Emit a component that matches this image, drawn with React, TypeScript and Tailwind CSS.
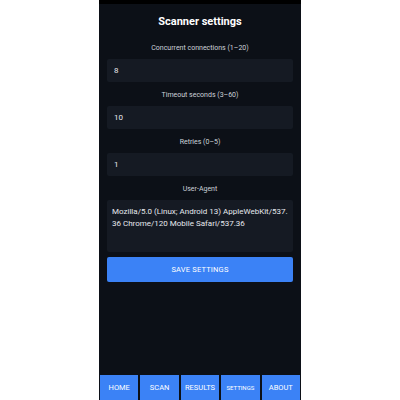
import { useState } from "react";

const NAV = ["HOME", "SCAN", "RESULTS", "SETTINGS", "ABOUT"];

function Field({
  label,
  value,
  onChange,
}: {
  label: string;
  value: string;
  onChange: (v: string) => void;
}) {
  return (
    <div className="flex flex-col">
      <label className="mt-[8px] mb-[6px] text-center text-[7px] leading-[10px] text-[#cdd2d9]">
        {label}
      </label>
      <input
        value={value}
        onChange={(e) => onChange(e.target.value)}
        className="h-[23px] w-full rounded-[2px] bg-[#151a23] px-[7px] text-[8px] text-[#e6e9ee] outline-none"
      />
    </div>
  );
}

export default function App() {
  const [conns, setConns] = useState("8");
  const [timeout, setTimeoutVal] = useState("10");
  const [retries, setRetries] = useState("1");
  const [ua, setUa] = useState(
    "Mozilla/5.0 (Linux; Android 13) AppleWebKit/537.36 Chrome/120 Mobile Safari/537.36"
  );

  return (
    <div className="flex min-h-screen justify-center bg-white font-['Roboto',sans-serif]">
      <div className="flex h-[400px] w-[202px] flex-col bg-[#0c1017]">
        <div className="h-[4px] bg-black" />
        <main className="flex flex-1 flex-col px-[8px]">
          <h1 className="mt-[11px] text-center text-[11px] font-bold leading-[14px] text-white">
            Scanner settings
          </h1>
          <div className="h-[6px]" />
          <Field label="Concurrent connections (1–20)" value={conns} onChange={setConns} />
          <Field label="Timeout seconds (3–60)" value={timeout} onChange={setTimeoutVal} />
          <Field label="Retries (0–5)" value={retries} onChange={setRetries} />
          <div className="flex flex-col">
            <label className="mt-[8px] mb-[6px] text-center text-[7px] leading-[10px] text-[#cdd2d9]">
              User-Agent
            </label>
            <textarea
              value={ua}
              onChange={(e) => setUa(e.target.value)}
              className="h-[52px] w-full resize-none break-all rounded-[2px] bg-[#151a23] px-[5px] py-[6px] text-[8px] leading-[12px] text-[#e6e9ee] outline-none"
            />
          </div>
          <button className="mt-[5px] h-[25px] w-full rounded-[2px] bg-[#3b82f6] text-[7.5px] tracking-wide text-white">
            SAVE SETTINGS
          </button>
        </main>
        <nav className="grid h-[25px] grid-cols-5 gap-[2px] px-[1px]">
          {NAV.map((n) => (
            <button
              key={n}
              className={
                "bg-[#3b82f6] text-white " +
                (n === "SETTINGS" ? "text-[6px]" : "text-[7.5px]")
              }
            >
              {n}
            </button>
          ))}
        </nav>
      </div>
    </div>
  );
}
